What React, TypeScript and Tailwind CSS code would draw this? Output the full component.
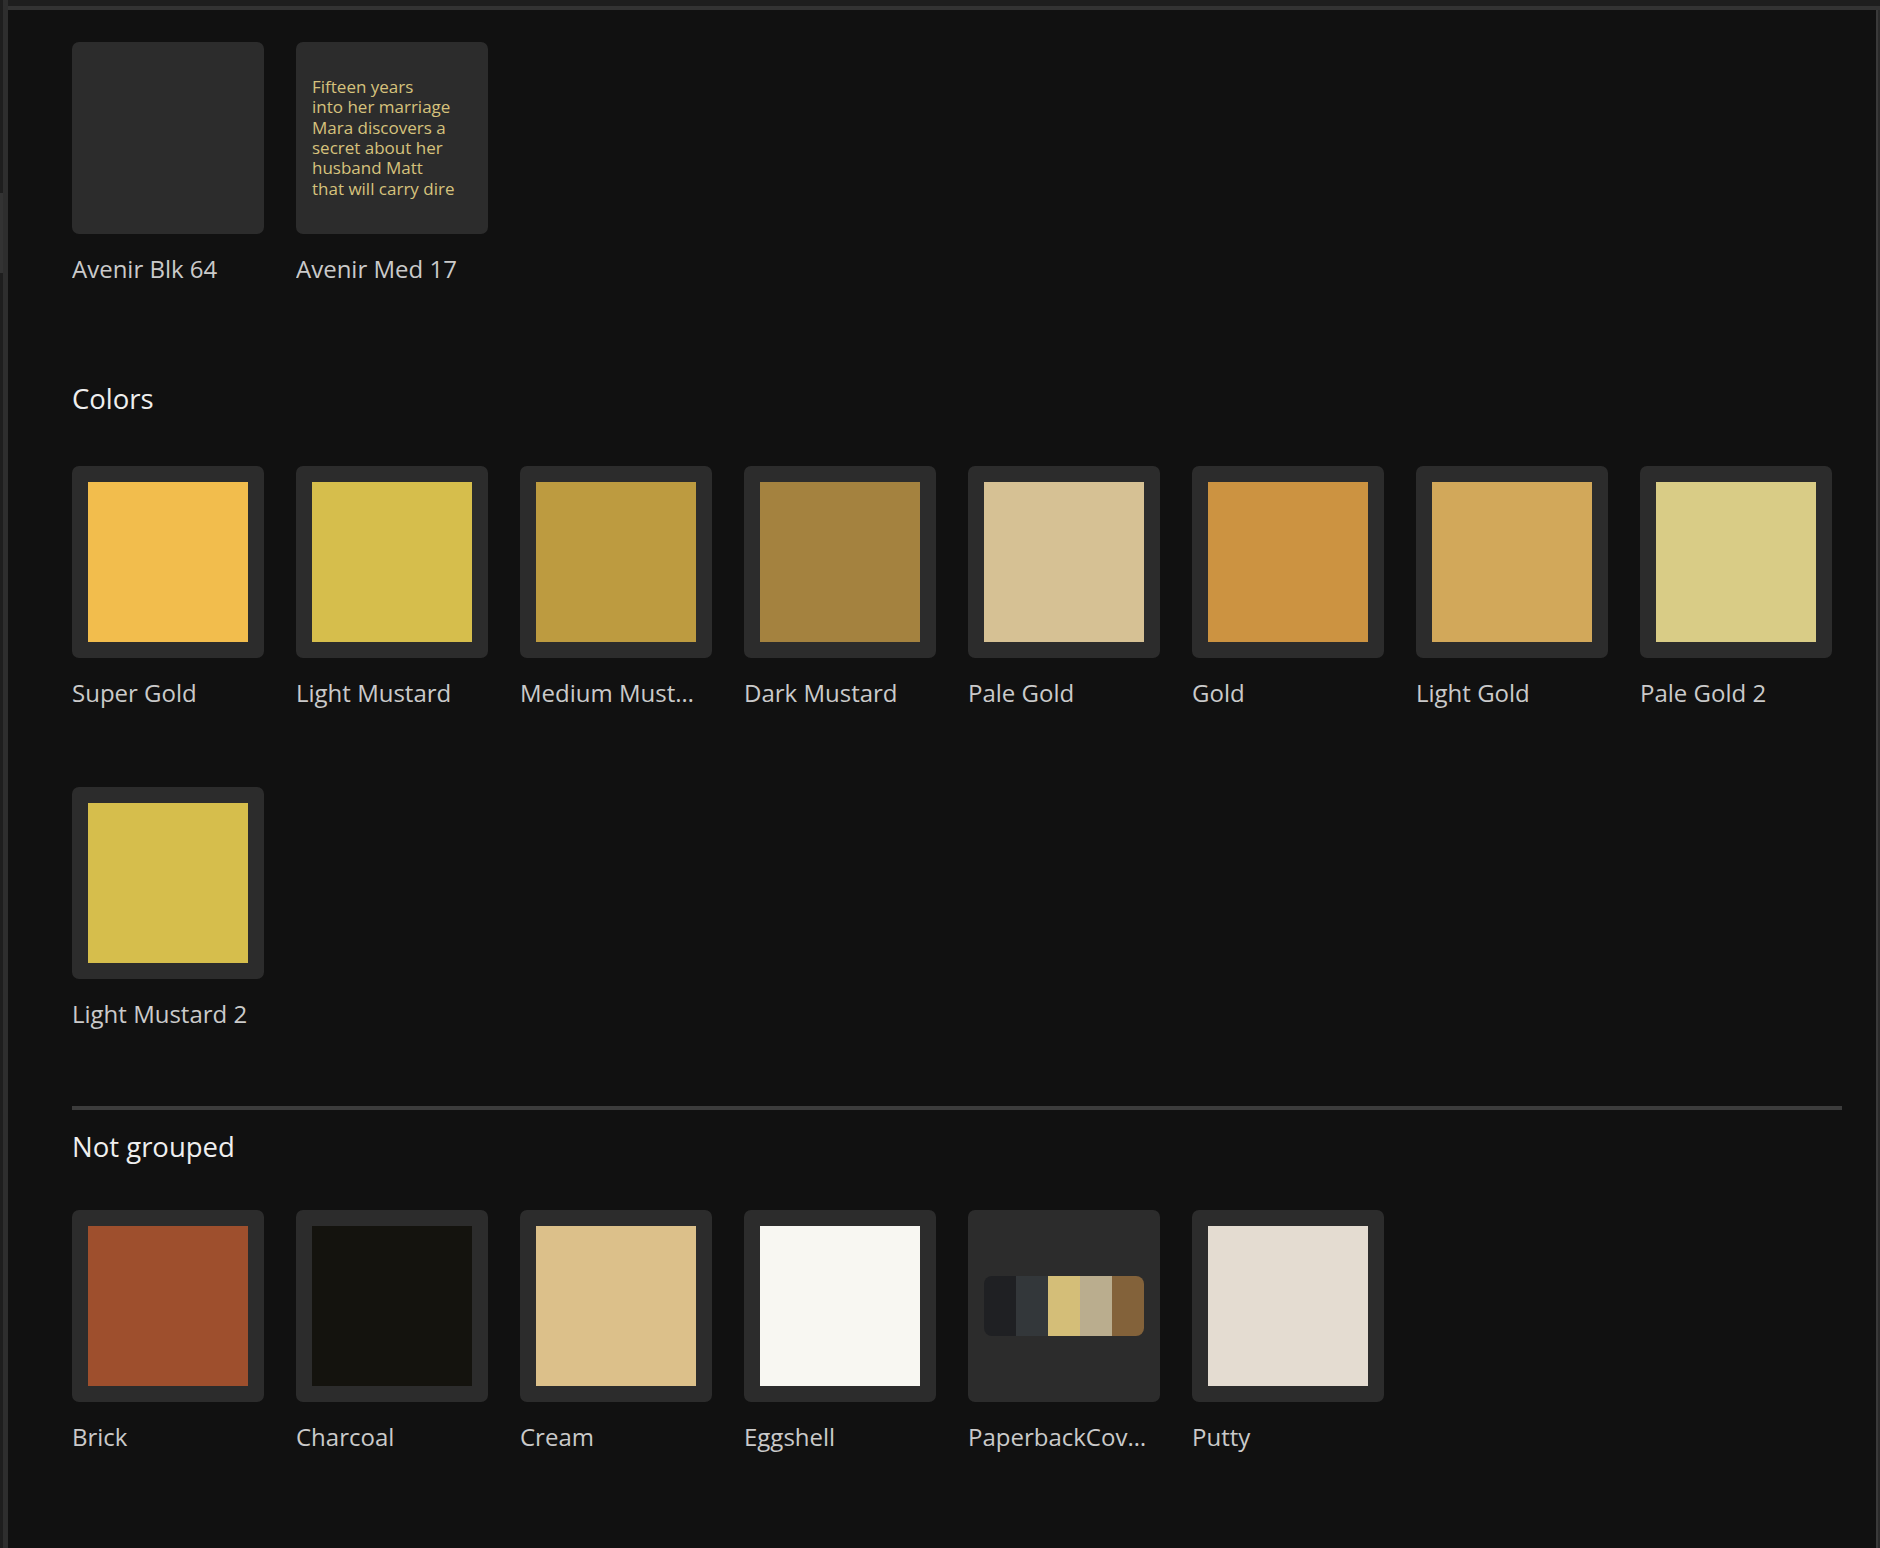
const font = { fontFamily: '"Open Sans", Lato, sans-serif' }

const colors = [
  { name: 'Super Gold', hex: '#f2bd4d' },
  { name: 'Light Mustard', hex: '#d6be4c' },
  { name: 'Medium Mustard', hex: '#bd9b40' },
  { name: 'Dark Mustard', hex: '#a4823f' },
  { name: 'Pale Gold', hex: '#d6c194' },
  { name: 'Gold', hex: '#cc9341' },
  { name: 'Light Gold', hex: '#d2a85a' },
  { name: 'Pale Gold 2', hex: '#d9cc86' },
  { name: 'Light Mustard 2', hex: '#d6be4c' },
]

const ungrouped = [
  { name: 'Brick', hex: '#9e4f2d' },
  { name: 'Charcoal', hex: '#14130e' },
  { name: 'Cream', hex: '#dcc08a' },
  { name: 'Eggshell', hex: '#f8f7f2' },
  { name: 'PaperbackCover', palette: ['#1f2023', '#33373a', '#d4be78', '#baad8e', '#83623a'] },
  { name: 'Putty', hex: '#e4dcd1' },
]

function Label({ children }: { children: string }) {
  return (
    <div className="mt-[19px] w-[180px] truncate text-[24px] leading-[32px] text-[#cacaca]">
      {children}
    </div>
  )
}

function Card({ children }: { children?: React.ReactNode }) {
  return (
    <div className="flex h-[192px] w-[192px] rounded-[7px] bg-[#2c2c2c] p-4">
      {children}
    </div>
  )
}

function Swatch({ name, hex }: { name: string; hex: string }) {
  return (
    <div>
      <Card>
        <div className="h-full w-full" style={{ backgroundColor: hex }} />
      </Card>
      <Label>{name}</Label>
    </div>
  )
}

function Palette({ name, palette }: { name: string; palette: string[] }) {
  return (
    <div>
      <Card>
        <div className="my-auto flex h-[60px] w-full overflow-hidden rounded-[8px]">
          {palette.map((c) => (
            <div key={c} className="flex-1" style={{ backgroundColor: c }} />
          ))}
        </div>
      </Card>
      <Label>{name}</Label>
    </div>
  )
}

export default function App() {
  return (
    <div className="flex h-[1548px] w-[1880px] overflow-hidden bg-[#111111]" style={font}>
      {/* left panel edge */}
      <div className="flex w-2 shrink-0">
        <div className="flex w-[3px] flex-col">
          <div className="h-[193px] bg-[#1e1e1e]" />
          <div className="h-[80px] bg-[#333333]" />
          <div className="flex-1 bg-[#1e1e1e]" />
        </div>
        <div className="flex-1 bg-[#2e2e2e]" />
      </div>

      <div className="flex min-w-0 flex-1 flex-col">
        <div className="h-[6px] bg-[#1e1e1e]" />
        <div className="h-1 bg-[#333333]" />

        <div className="flex flex-1">
          <div className="flex-1 pl-16 pr-[34px] pt-8">
            {/* character styles */}
            <div className="grid grid-cols-[repeat(8,192px)] gap-x-8">
              <div>
                <Card />
                <Label>Avenir Blk 64</Label>
              </div>
              <div>
                <Card>
                  <p className="my-auto text-[17px] leading-[20.4px] text-[#d6c27c]">
                    Fifteen years
                    <br />
                    into her marriage
                    <br />
                    Mara discovers a
                    <br />
                    secret about her
                    <br />
                    husband Matt
                    <br />
                    that will carry dire
                  </p>
                </Card>
                <Label>Avenir Med 17</Label>
              </div>
            </div>

            <h2 className="mt-[96px] text-[27.5px] leading-[36px] text-[#efefef]">Colors</h2>
            <div className="mt-[49px] grid grid-cols-[repeat(8,192px)] gap-x-8 gap-y-[78px]">
              {colors.map((c) => (
                <Swatch key={c.name} name={c.name} hex={c.hex} />
              ))}
            </div>

            <div className="mt-[76px] h-1 bg-[#3c3c3c]" />

            <h2 className="mt-[19px] text-[27.5px] leading-[36px] text-[#efefef]">Not grouped</h2>
            <div className="mt-[45px] grid grid-cols-[repeat(8,192px)] gap-x-8">
              {ungrouped.map((c) =>
                c.palette ? (
                  <Palette key={c.name} name={c.name} palette={c.palette} />
                ) : (
                  <Swatch key={c.name} name={c.name} hex={c.hex!} />
                )
              )}
            </div>
          </div>

          {/* right panel edge */}
          <div className="flex w-1 shrink-0">
            <div className="w-[2px] bg-[#3a3a3a]" />
            <div className="w-[2px] bg-[#2a2a2a]" />
          </div>
        </div>
      </div>
    </div>
  )
}
